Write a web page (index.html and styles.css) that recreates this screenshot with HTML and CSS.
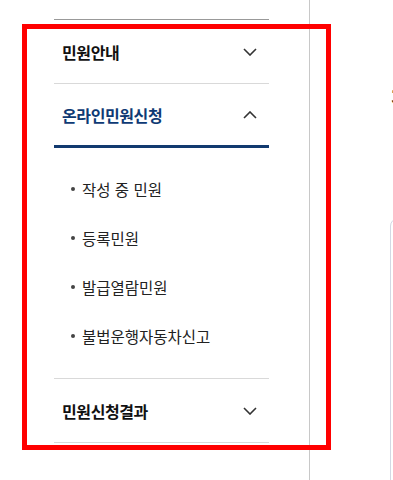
FILE: index.html
```html
<!DOCTYPE html>
<html lang="ko">
<head>
<meta charset="utf-8">
<title>민원신청</title>
<link rel="stylesheet" href="styles.css">
</head>
<body>
<div class="page">
  <aside class="lnb">
    <div class="lnb-top"></div>
    <ul class="menu">
      <li class="menu-item">
        <div class="menu-head">
          <span class="menu-label">민원안내</span>
          <svg class="chev" width="14" height="8" viewBox="0 0 14 8"><path d="M1 1 L7 7 L13 1" fill="none" stroke="#333" stroke-width="1.6"/></svg>
        </div>
      </li>
      <li class="menu-item open">
        <div class="menu-head">
          <span class="menu-label">온라인민원신청</span>
          <svg class="chev" width="14" height="8" viewBox="0 0 14 8"><path d="M1 7 L7 1 L13 7" fill="none" stroke="#333" stroke-width="1.6"/></svg>
        </div>
        <ul class="sub">
          <li class="sub-item">작성 중 민원</li>
          <li class="sub-item">등록민원</li>
          <li class="sub-item">발급열람민원</li>
          <li class="sub-item">불법운행자동차신고</li>
        </ul>
      </li>
      <li class="menu-item">
        <div class="menu-head">
          <span class="menu-label">민원신청결과</span>
          <svg class="chev" width="14" height="8" viewBox="0 0 14 8"><path d="M1 1 L7 7 L13 1" fill="none" stroke="#333" stroke-width="1.6"/></svg>
        </div>
      </li>
    </ul>
  </aside>
  <main class="content">
    <h2 class="title">작성 중 민원</h2>
    <div class="card"></div>
  </main>
  <div class="highlight"></div>
</div>
</body>
</html>
```
FILE: styles.css
```css
html, body {
  margin: 0;
  padding: 0;
  background: #fff;
}
body {
  font-family: "Noto Sans CJK KR", "Noto Sans", sans-serif;
  color: #222;
  width: 393px;
  height: 480px;
  overflow: hidden;
}
.page {
  position: relative;
  display: flex;
  height: 480px;
}
.lnb {
  width: 309px;
  flex: none;
  border-right: 1px solid #c8c8c8;
  box-sizing: content-box;
}
.lnb-top {
  height: 19px;
  margin: 0 40px 0 54px;
  border-bottom: 1px solid #999;
}
.menu {
  list-style: none;
  margin: 0 40px 0 54px;
  padding: 0;
}
.menu-item {
  border-bottom: 1px solid #d9d9d9;
}
.menu-head {
  height: 63px;
  display: flex;
  align-items: center;
  justify-content: space-between;
  padding: 0 12px 0 8px;
}
.menu-label {
  font-size: 16px;
  font-weight: 700;
  color: #111;
  letter-spacing: -0.4px;
}
.chev {
  display: block;
}
.menu-item.open .menu-head {
  height: 61px;
  border-bottom: 3px solid #123a6f;
}
.menu-item.open .menu-label {
  color: #0e3a74;
}
.sub {
  list-style: none;
  margin: 0;
  padding: 16px 0 18px 17px;
}
.sub-item {
  display: flex;
  align-items: center;
  gap: 7px;
  height: 49px;
  font-size: 15.5px;
  color: #222;
}
.sub-item::before {
  content: "";
  width: 4px;
  height: 4px;
  border-radius: 50%;
  background: #444;
  flex: none;
}
.content {
  flex: 1;
  min-width: 0;
  overflow: hidden;
  display: flex;
  flex-direction: column;
}
.title {
  margin: 84px 0 0 81px;
  font-size: 26px;
  line-height: 32px;
  font-weight: 700;
  color: #111;
  white-space: nowrap;
}
.card {
  margin: 102px 0 0 80px;
  width: 300px;
  height: 400px;
  border: 1px solid #d3d8e4;
  border-radius: 8px;
  flex: none;
}
.highlight {
  position: absolute;
  left: 22px;
  top: 24px;
  width: 299px;
  height: 416px;
  border: 5px solid #ff0000;
}
```
